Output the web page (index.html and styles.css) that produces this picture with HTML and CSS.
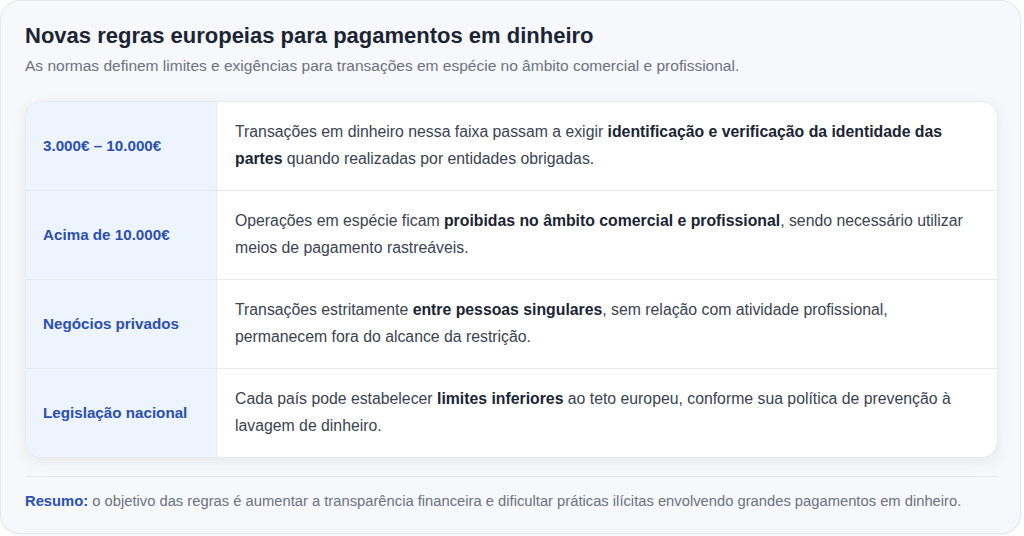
FILE: index.html
```html
<!DOCTYPE html>
<html lang="pt">
<head>
<meta charset="utf-8">
<link rel="stylesheet" href="styles.css">
</head>
<body>
<div class="card">
  <h1 class="title">Novas regras europeias para pagamentos em dinheiro</h1>
  <p class="subtitle">As normas definem limites e exigências para transações em espécie no âmbito comercial e profissional.</p>
  <div class="table">
    <div class="row">
      <div class="label">3.000€ – 10.000€</div>
      <div class="desc">Transações em dinheiro nessa faixa passam a exigir <b>identificação e verificação da identidade das partes</b> quando realizadas por entidades obrigadas.</div>
    </div>
    <div class="row">
      <div class="label">Acima de 10.000€</div>
      <div class="desc">Operações em espécie ficam <b>proibidas no âmbito comercial e profissional</b>, sendo necessário utilizar meios de pagamento rastreáveis.</div>
    </div>
    <div class="row">
      <div class="label">Negócios privados</div>
      <div class="desc">Transações estritamente <b>entre pessoas singulares</b>, sem relação com atividade profissional, permanecem fora do alcance da restrição.</div>
    </div>
    <div class="row">
      <div class="label">Legislação nacional</div>
      <div class="desc">Cada país pode estabelecer <b>limites inferiores</b> ao teto europeu, conforme sua política de prevenção à lavagem de dinheiro.</div>
    </div>
  </div>
  <p class="summary"><b>Resumo:</b> o objetivo das regras é aumentar a transparência financeira e dificultar práticas ilícitas envolvendo grandes pagamentos em dinheiro.</p>
</div>
</body>
</html>
```

FILE: styles.css
```css
* { box-sizing: border-box; }
html, body { margin: 0; padding: 0; background: #ffffff; }
body {
  font-family: "Liberation Sans", Arial, sans-serif;
  width: 1024px;
  height: 536px;
  overflow: hidden;
}
.card {
  width: 1021px;
  height: 534px;
  background: #f7f8fb;
  border: 1px solid #e4e7ec;
  border-radius: 20px;
  padding: 21px 22px 0 24px;
  box-shadow: 0 1px 3px rgba(15, 23, 42, 0.06);
}
.title {
  margin: 0;
  font-size: 22px;
  line-height: 28px;
  font-weight: 700;
  color: #1b2433;
}
.subtitle {
  margin: 6px 0 0;
  font-size: 15.5px;
  line-height: 20px;
  color: #6b7280;
}
.table {
  margin-top: 25px;
  background: #ffffff;
  border: 1px solid #e6e9ef;
  border-radius: 16px;
  overflow: hidden;
  box-shadow: 0 4px 14px rgba(15, 23, 42, 0.07);
}
.row {
  display: grid;
  grid-template-columns: 191px 1fr;
  border-top: 1px solid #e6e9ef;
}
.row:first-child { border-top: none; }
.label {
  background: #eef4fd;
  border-right: 1px solid #e6e9ef;
  display: flex;
  align-items: center;
  padding: 0 17px 2px;
  font-size: 15.2px;
  font-weight: 700;
  color: #2a4fb0;
}
.desc {
  padding: 16px 18px 18px;
  font-size: 15.8px;
  line-height: 27px;
  color: #3a4250;
}
.desc b { color: #1b2433; font-weight: 700; }
.summary {
  margin: 18px 0 0;
  border-top: 1px solid #e4e7ec;
  padding-top: 14px;
  font-size: 14.75px;
  line-height: 20px;
  color: #6b7280;
}
.summary b { color: #2a4fb0; }
```
